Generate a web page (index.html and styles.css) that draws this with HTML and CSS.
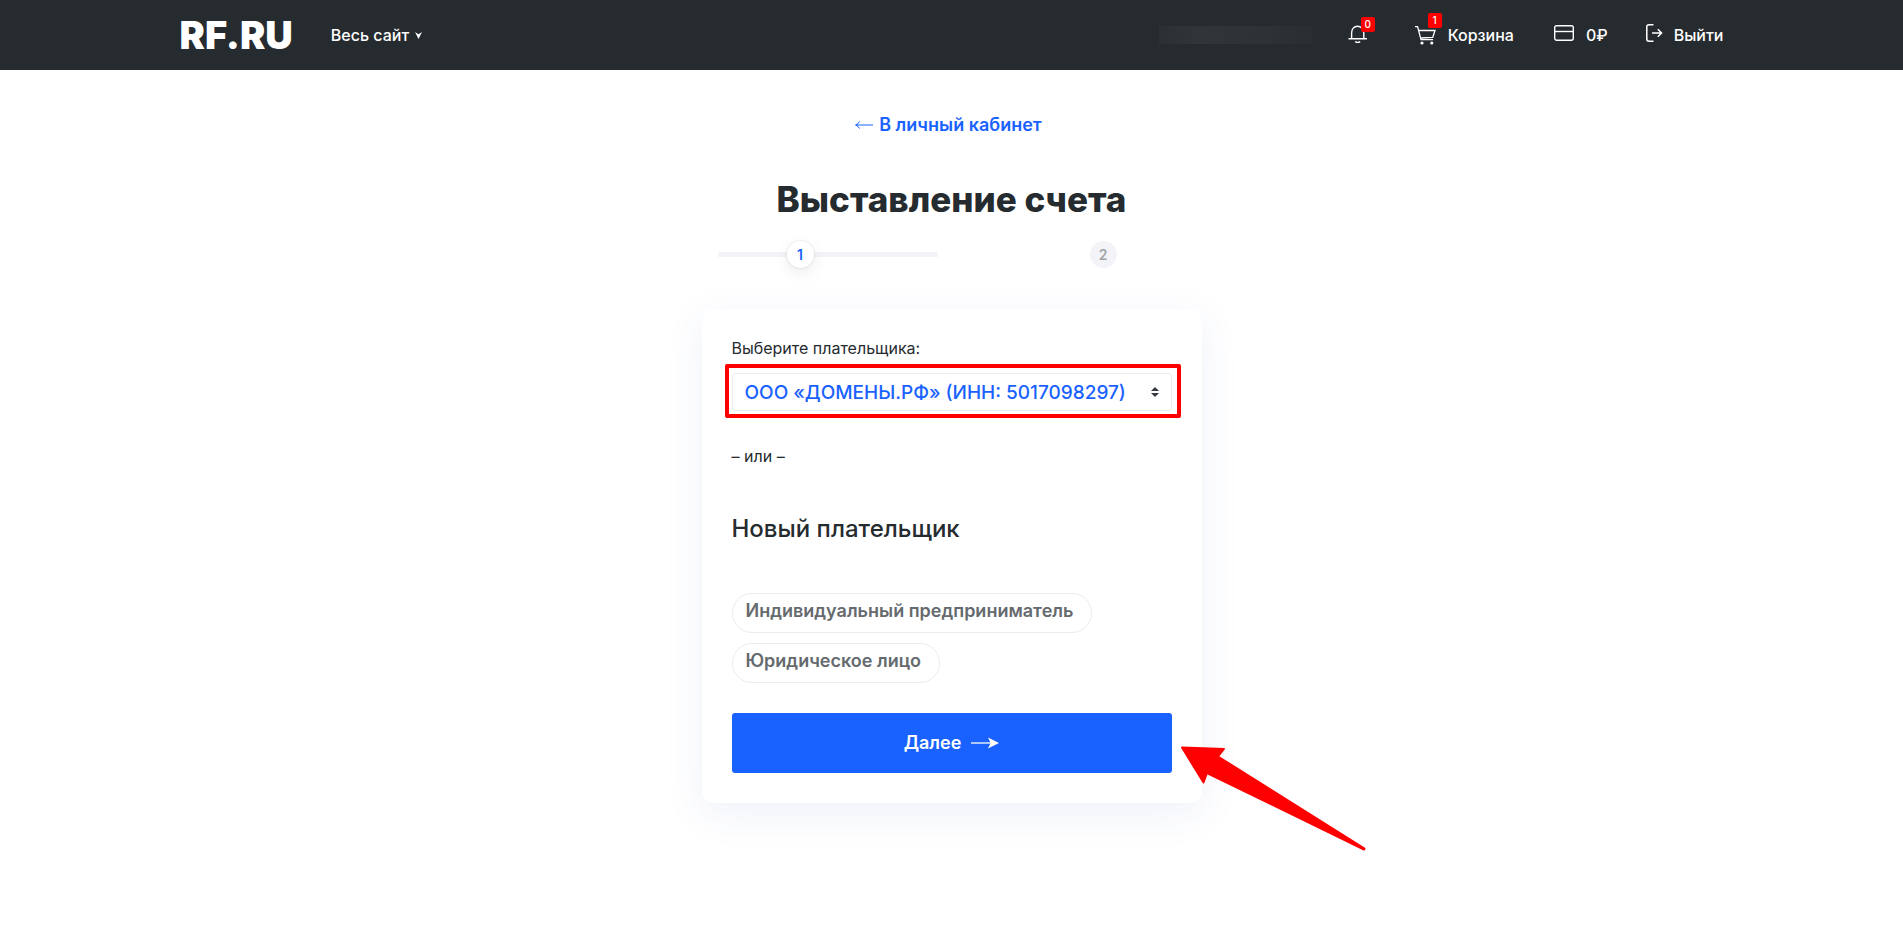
FILE: index.html
```html
<!DOCTYPE html>
<html lang="ru">
<head>
<meta charset="utf-8">
<meta name="viewport" content="width=device-width, initial-scale=1">
<title>Выставление счета</title>
<link rel="stylesheet" href="styles.css">
</head>
<body>
<header class="header">
  <div class="header-inner">
    <a class="logo" href="#">RF.RU</a>
    <button class="site-menu" type="button">Весь сайт
      <svg width="7" height="7" viewBox="0 0 7 7" aria-hidden="true"><path d="M0 0 3.500 2.200 7 0 3.500 7z" fill="#fff"/></svg>
    </button>
    <nav class="user-nav">
      <span class="account"></span>
      <a class="nav-link bell" href="#" aria-label="Уведомления">
        <span class="icon">
          <svg width="20" height="20" viewBox="0 0 20 20" fill="none" stroke="#fff" stroke-width="1.4" aria-hidden="true"><path d="M3.6 13V8C3.6 4 6 1.300 9.500 1.300S15.800 4 15.800 8v5M.5 13.700h18.500M7.200 16.600q2.500 1.600 5 0"/></svg>
          <span class="badge">0</span>
        </span>
      </a>
      <a class="nav-link cart" href="#">
        <span class="icon">
          <svg width="21" height="20" viewBox="0 0 21 20" fill="none" stroke="#fff" stroke-width="1.300" aria-hidden="true"><path d="M0 1.600h2.600L6 14.600h12M3.800 5.500H20l-2.200 6.800-12 .7"/><circle cx="7" cy="18" r="1.600" fill="#fff" stroke="none"/><circle cx="16.800" cy="18" r="1.600" fill="#fff" stroke="none"/></svg>
          <span class="badge badge-high">1</span>
        </span>
        Корзина
      </a>
      <a class="nav-link balance" href="#">
        <svg width="20" height="16" viewBox="0 0 20 16" fill="none" stroke="#fff" stroke-width="1.400" aria-hidden="true"><rect x=".7" y=".7" width="18.600" height="14.600" rx="2"/><path d="M1 6.500h18"/></svg>
        0₽
      </a>
      <a class="nav-link logout" href="#">
        <svg width="17" height="18" viewBox="0 0 17 18" fill="none" stroke="#fff" stroke-width="1.500" aria-hidden="true"><path d="M7.500.8H3Q.8.800.8 3v12Q.8 17.200 3 17.200h4.500M6 9h9.500M11.800 5.200 15.600 9l-3.800 3.800"/></svg>
        Выйти
      </a>
    </nav>
  </div>
</header>
<main class="page">
  <a class="back" href="#">
    <svg width="18" height="8" viewBox="0 0 18 8" fill="none" stroke="#1a62ff" stroke-width="1" aria-hidden="true"><path d="M1 4h17M4.500.5Q3.500 3 .5 4 3.500 5 4.500 7.500"/></svg>
    В личный кабинет
  </a>
  <h1 class="title">Выставление счета</h1>
  <ol class="steps">
    <li class="step step-active"><span class="dot">1</span></li>
    <li class="step"><span class="dot">2</span></li>
  </ol>
  <form class="card">
    <label class="label" for="payer">Выберите плательщика:</label>
    <div class="select-wrap">
      <select class="select" id="payer">
        <option>ООО «ДОМЕНЫ.РФ» (ИНН: 5017098297)</option>
      </select>
      <svg class="caret" width="8" height="10" viewBox="0 0 8 10" aria-hidden="true"><path d="M0 4 4 0l4 4zM0 6h8L4 10z" fill="#343a40"/></svg>
      <span class="highlight"></span>
    </div>
    <p class="or">– или –</p>
    <h2 class="subtitle">Новый плательщик</h2>
    <div class="chips">
      <button class="chip" type="button">Индивидуальный предприниматель</button>
      <button class="chip" type="button">Юридическое лицо</button>
    </div>
    <div class="submit-wrap">
      <button class="submit" type="button">Далее
        <svg width="28" height="12" viewBox="0 0 28 12" aria-hidden="true"><path d="M0 6h20" stroke="#fff" stroke-width="1.300"/><path d="M17 .5 28 6 17 11.500 19.600 6z" fill="#fff"/></svg>
      </button>
      <svg class="pointer" width="190" height="112" viewBox="0 0 190 112" aria-hidden="true"><path d="M2 2.500 44 4 38 11.500 184.500 103.500 184 104.500 27 28 23.500 37.500z" fill="#f00" stroke="#f00" stroke-width="2" stroke-linejoin="round"/></svg>
    </div>
  </form>
</main>
</body>
</html>
```
FILE: styles.css
```css
* { box-sizing: border-box; }

body {
  margin: 0;
  background: #fff;
  color: #252b2f;
  font-family: Inter, "Liberation Sans", sans-serif;
  font-size: 16px;
  line-height: 24px;
}

a { color: inherit; text-decoration: none; }
button { font: inherit; color: inherit; cursor: pointer; }
svg { flex: none; }

.header { background: #262b2f; color: #fff; }

.header-inner {
  display: flex;
  align-items: center;
  max-width: 1584px;
  height: 70px;
  margin: 0 auto;
  padding: 0 20px;
}

.logo { font-size: 38px; font-weight: 900; line-height: 40px; }

.site-menu {
  display: flex;
  align-items: center;
  gap: 6px;
  margin-left: 38px;
  padding: 0;
  border: 0;
  background: none;
  font-size: 16px;
  font-weight: 500;
}

.user-nav {
  display: flex;
  align-items: center;
  margin-left: auto;
  font-size: 16px;
  font-weight: 500;
}

.account {
  width: 153px;
  height: 18px;
  margin-right: 36px;
  background: linear-gradient(90deg, #2b3033, #303537 25%, #2d3235 70%, #292e31);
}

.nav-link { display: flex; align-items: center; gap: 12px; }
.bell { margin-right: 47px; }
.cart { margin-right: 40px; }
.balance { margin-right: 38px; }
.logout { gap: 11px; }

.balance svg,
.logout svg { margin-bottom: 4px; }

.icon { position: relative; display: flex; }

.badge {
  position: absolute;
  top: -8px;
  left: 13px;
  width: 14px;
  height: 15px;
  border-radius: 2px;
  background: #f00;
  font-size: 10px;
  line-height: 15px;
  text-align: center;
}

.badge-high { top: -12px; }

.page {
  display: flex;
  flex-direction: column;
  align-items: center;
  padding: 43px 16px 80px;
}

.back {
  display: flex;
  align-items: center;
  gap: 6px;
  margin-right: 6px;
  color: #1a62ff;
  font-size: 18px;
  font-weight: 600;
}

.title {
  margin: 38px 0 0;
  font-size: 35px;
  font-weight: 800;
  line-height: 48px;
}

.steps {
  display: flex;
  justify-content: space-between;
  width: 100%;
  max-width: 500px;
  margin: 18px 0 41px;
  padding: 0 85px 0 16px;
  list-style: none;
}

.step-active {
  width: 220px;
  padding-left: 69px;
  background: linear-gradient(#f4f4f8, #f4f4f8) center / 100% 5px no-repeat;
}

.dot {
  display: block;
  width: 27px;
  height: 27px;
  border-radius: 50%;
  background: #f4f4f8;
  color: #a0a3a6;
  font-size: 14px;
  font-weight: 600;
  line-height: 27px;
  text-align: center;
}

.step-active .dot {
  background: #fff;
  color: #1a62ff;
  box-shadow: 0 0 2px 1px rgba(0, 0, 0, .06), 0 5px 16px rgba(0, 0, 0, .08);
}

.card {
  width: 100%;
  max-width: 500px;
  padding: 27px 30px 30px;
  border-radius: 12px;
  background: #fff;
  box-shadow: 0 10px 40px rgba(50, 80, 180, .08);
}

.label { display: block; font-size: 16px; }

.select-wrap { position: relative; margin-top: 13px; }

.select {
  display: block;
  width: 100%;
  height: 38px;
  padding: 2px 40px 0 12px;
  border: 1px solid #ececee;
  border-radius: 4px;
  appearance: none;
  background: #fff;
  color: #1a62ff;
  font: 500 19px/24px Inter, "Liberation Sans", sans-serif;
}

.caret { position: absolute; top: 14px; right: 13px; pointer-events: none; }

.highlight {
  position: absolute;
  inset: -9px -9px -7px -7px;
  border: 4px solid #f00;
  border-radius: 2px;
  pointer-events: none;
}

.or { margin: 33px 0 0; }

.subtitle {
  margin: 45px 0 0;
  font-size: 24px;
  font-weight: 500;
  line-height: 32px;
}

.chips {
  display: flex;
  flex-direction: column;
  align-items: flex-start;
  gap: 10px;
  margin-top: 48px;
}

.chip {
  height: 40px;
  padding: 0 18px 4px 13px;
  border: 1px solid #ececee;
  border-radius: 20px;
  background: #fff;
  color: #656a6e;
  font-size: 18px;
  font-weight: 600;
}

.submit-wrap { position: relative; margin-top: 30px; }

.submit {
  display: flex;
  align-items: center;
  justify-content: center;
  gap: 10px;
  width: 100%;
  height: 60px;
  border: 0;
  border-radius: 3px;
  background: #1a62ff;
  color: #fff;
  font-size: 18px;
  font-weight: 600;
}

.pointer {
  position: absolute;
  top: 32px;
  left: calc(100% + 8px);
  pointer-events: none;
}
```
